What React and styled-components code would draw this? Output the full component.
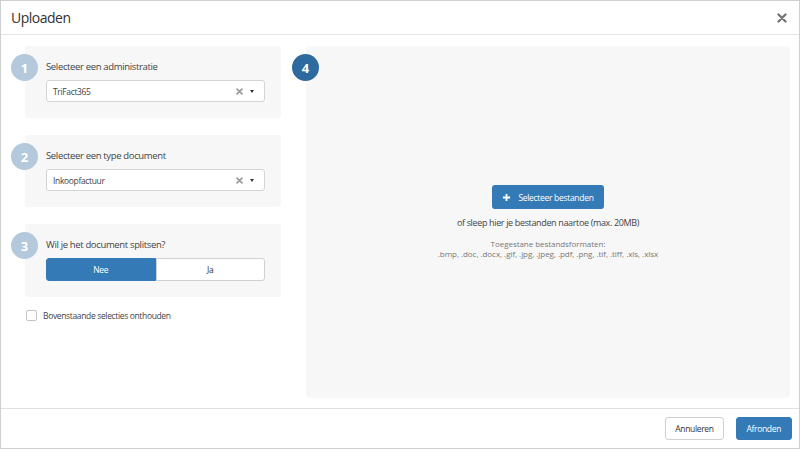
import React, { useState } from "react"
import styled, { createGlobalStyle } from 'styled-components'

const Global = createGlobalStyle`
  html, body { margin: 0; padding: 0; background: #fff; }
  body { font-family: "Open Sans", "Liberation Sans", sans-serif; color: #333; }
  * { box-sizing: border-box; }
`;

const Modal = styled.div`
  width: 800px;
  height: 449px;
  border: 1px solid #cfcfcf;
  display: flex;
  flex-direction: column;
  background: #fff;
`;

const Header = styled.div`
  height: 34px;
  flex: none;
  display: flex;
  align-items: center;
  justify-content: space-between;
  padding: 0 12px 0 10px;
  border-bottom: 1px solid #e5e5e5;
`;

const Title = styled.h4`
  margin: 0;
  font-size: 14px;
  letter-spacing: -0.5px;
  font-weight: 500;
  color: #333;
`;

const Close = styled.button`
  border: 0;
  background: none;
  padding: 0;
  display: flex;
  cursor: pointer;
`;

const Body = styled.div`
  flex: 1;
  display: flex;
  gap: 25px;
  padding: 11px 9px 10px 24px;
  min-height: 0;
`;

const LeftCol = styled.div`
  width: 256px;
  flex: none;
  display: flex;
  flex-direction: column;
  gap: 17px;
`;

const Card = styled.div`
  position: relative;
  background: #f7f7f7;
  border-radius: 3px;
  padding: 13px 16px 16px 21px;
`;

const Step = styled.span`
  position: absolute;
  left: -14px;
  top: 8px;
  width: 27px;
  height: 27px;
  border-radius: 50%;
  background: ${p => p.active ? '#2d6a9f' : '#b4c9dc'};
  color: #fff;
  font-size: 13px;
  font-weight: 700;
  display: flex;
  align-items: center;
  justify-content: center;
`;

const Label = styled.div`
  font-size: 9.5px;
  letter-spacing: -0.35px;
  line-height: 16px;
  color: #444;
  margin-bottom: 5px;
`;

const Select = styled.div`
  height: 22px;
  background: #fff;
  border: 1px solid #d4d4d4;
  border-radius: 3px;
  display: flex;
  align-items: center;
  padding: 0 10px 0 6px;
  font-size: 8.5px;
  letter-spacing: -0.35px;
  color: #444;
`;

const SelectValue = styled.span`
  flex: 1;
`;

const Clear = styled.span`
  display: flex;
  margin-right: 7px;
`;

const Caret = styled.span`
  width: 0;
  height: 0;
  border-left: 2.5px solid transparent;
  border-right: 2.5px solid transparent;
  border-top: 3px solid #333;
`;

const Toggle = styled.div`
  display: flex;
  height: 23px;
`;

const ToggleBtn = styled.button`
  flex: 1;
  font-family: inherit;
  font-size: 8.5px;
  letter-spacing: -0.3px;
  cursor: pointer;
  border: 1px solid ${p => p.on ? '#337ab7' : '#d0d0d0'};
  background: ${p => p.on ? '#337ab7' : '#fff'};
  color: ${p => p.on ? '#fff' : '#333'};
  border-radius: ${p => p.first ? '3px 0 0 3px' : '0 3px 3px 0'};
`;

const CheckRow = styled.label`
  display: flex;
  align-items: center;
  gap: 6px;
  font-size: 8.5px;
  letter-spacing: -0.35px;
  color: #444;
  margin-top: -4px;
  padding-left: 1px;
`;

const Box = styled.span`
  width: 11px;
  height: 11px;
  border: 1px solid #c4c4c4;
  border-radius: 2px;
  background: #fff;
`;

const DropZone = styled.div`
  position: relative;
  flex: 1;
  background: #f7f7f7;
  border-radius: 3px;
  display: flex;
  flex-direction: column;
  align-items: center;
  justify-content: center;
`;

const PrimaryButton = styled.button`
  height: 24px;
  padding: 0 10px 0 10px;
  border: 0;
  border-radius: 3px;
  background: #337ab7;
  color: #fff;
  font-family: inherit;
  font-size: 8.5px;
  letter-spacing: -0.3px;
  display: flex;
  align-items: center;
  gap: 7px;
  cursor: pointer;
`;

const DropHint = styled.div`
  margin-top: 7px;
  font-size: 9px;
  letter-spacing: -0.35px;
  color: #444;
`;

const Formats = styled.div`
  margin-top: 10px;
  font-size: 8px;
  letter-spacing: -0.05px;
  line-height: 10px;
  color: #777;
  text-align: center;
`;

const Footer = styled.div`
  height: 40px;
  flex: none;
  border-top: 1px solid #e0e0e0;
  display: flex;
  align-items: center;
  justify-content: flex-end;
  gap: 12px;
  padding: 0 7px 0 0;
`;

const FooterBtn = styled.button`
  height: 23px;
  padding: 0 ${p => p.primary ? '10px' : '9px'};
  border-radius: 3px;
  font-family: inherit;
  font-size: 8.5px;
  letter-spacing: -0.35px;
  cursor: pointer;
  border: 1px solid ${p => p.primary ? '#337ab7' : '#d0d0d0'};
  background: ${p => p.primary ? '#337ab7' : '#fff'};
  color: ${p => p.primary ? '#fff' : '#333'};
`;

const XIcon = ({ size = 7, color = '#999', width = 2 }) => (
  <svg width={size} height={size} viewBox="0 0 10 10">
    <path d="M1.5 1.5 L8.5 8.5 M8.5 1.5 L1.5 8.5" stroke={color} strokeWidth={width} strokeLinecap="round" />
  </svg>
)

const SelectBox = ({ value }) => (
  <Select>
    <SelectValue>{value}</SelectValue>
    <Clear><XIcon width={2.4} /></Clear>
    <Caret />
  </Select>
)

const App = () => {
  const [split, setSplit] = useState(false)

  return <Modal>
    <Global />
    <Header>
      <Title>Uploaden</Title>
      <Close><XIcon size={10} color="#777" width={2.4} /></Close>
    </Header>
    <Body>
      <LeftCol>
        <Card>
          <Step>1</Step>
          <Label>Selecteer een administratie</Label>
          <SelectBox value="TriFact365" />
        </Card>
        <Card>
          <Step>2</Step>
          <Label>Selecteer een type document</Label>
          <SelectBox value="Inkoopfactuur" />
        </Card>
        <Card>
          <Step>3</Step>
          <Label>Wil je het document splitsen?</Label>
          <Toggle>
            <ToggleBtn first on={!split} onClick={() => setSplit(false)}>Nee</ToggleBtn>
            <ToggleBtn on={split} onClick={() => setSplit(true)}>Ja</ToggleBtn>
          </Toggle>
        </Card>
        <CheckRow>
          <Box />
          Bovenstaande selecties onthouden
        </CheckRow>
      </LeftCol>
      <DropZone>
        <Step active>4</Step>
        <PrimaryButton>
          <svg width="9" height="9" viewBox="0 0 10 10">
            <path d="M5 1 V9 M1 5 H9" stroke="#fff" strokeWidth="2" />
          </svg>
          Selecteer bestanden
        </PrimaryButton>
        <DropHint>of sleep hier je bestanden naartoe (max. 20MB)</DropHint>
        <Formats>
          Toegestane bestandsformaten:<br />
          .bmp, .doc, .docx, .gif, .jpg, .jpeg, .pdf, .png, .tif, .tiff, .xls, .xlsx
        </Formats>
      </DropZone>
    </Body>
    <Footer>
      <FooterBtn>Annuleren</FooterBtn>
      <FooterBtn primary>Afronden</FooterBtn>
    </Footer>
  </Modal>
}

export default App;
